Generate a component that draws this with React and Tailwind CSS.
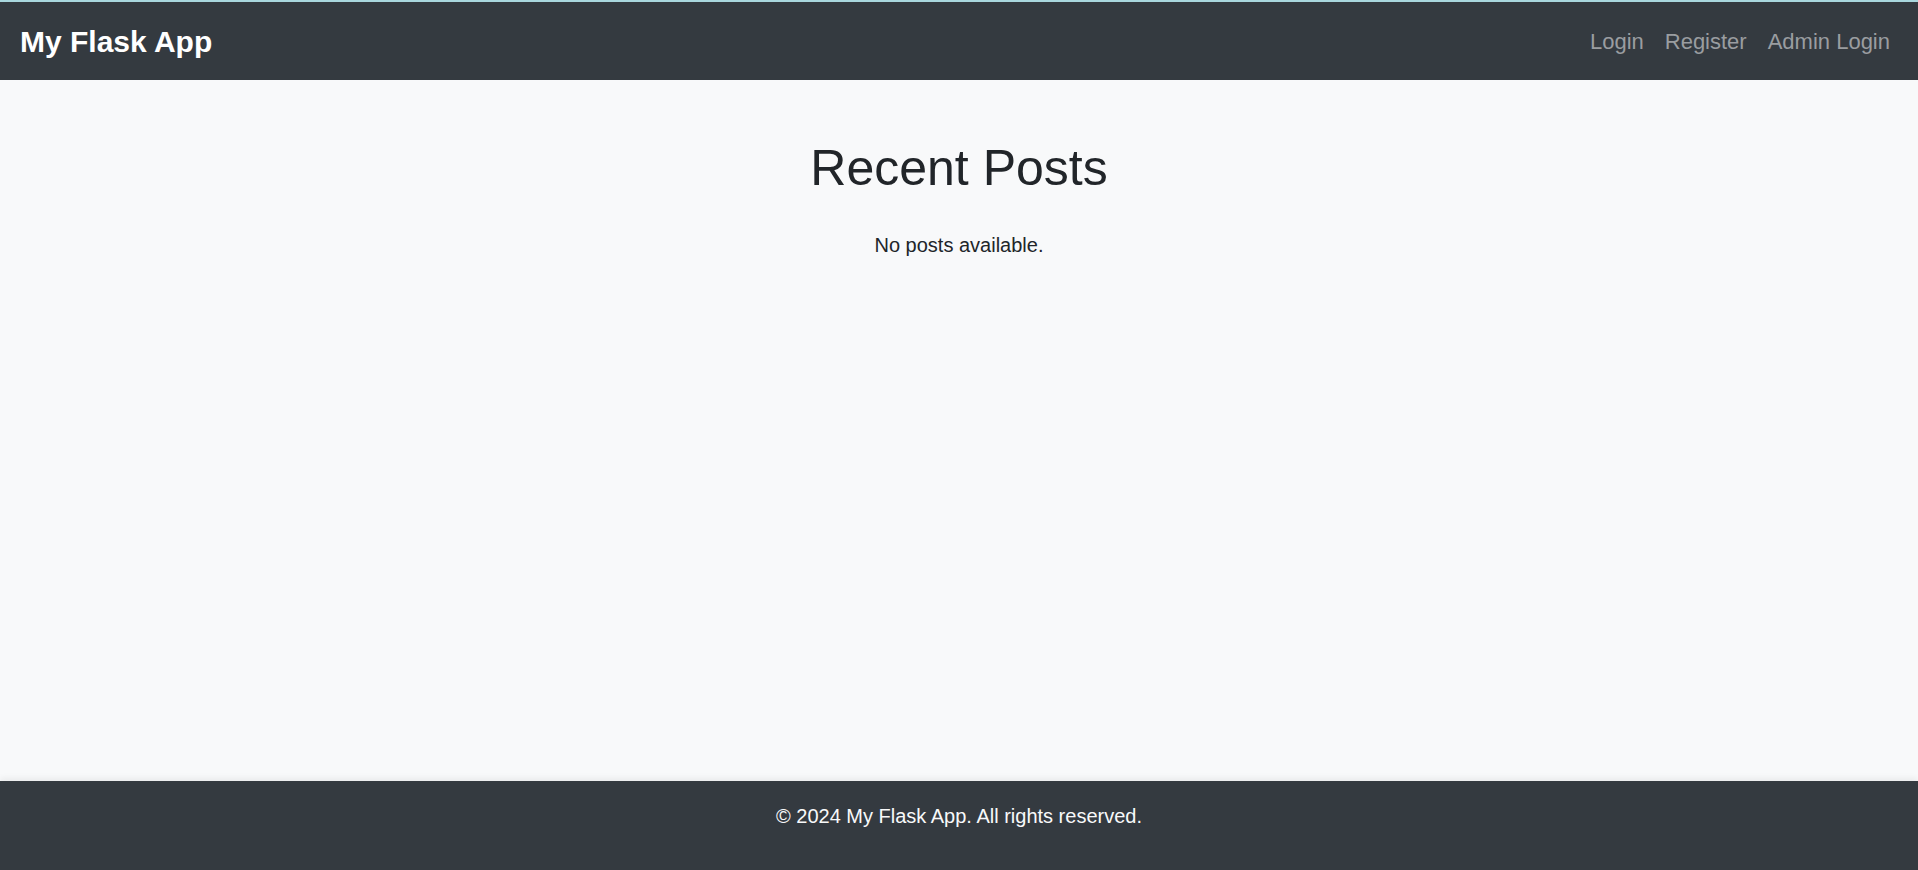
import React from "react";

const links = ["Login", "Register", "Admin Login"];

const App = () => {
  return (
    <div
      className="h-[870px] flex flex-col bg-[#f8f9fa] text-[#212529] overflow-hidden"
      style={{ fontFamily: '"Liberation Sans", Arial, sans-serif' }}
    >
      <div className="h-[2px] bg-[#a9d7de]" />
      <nav className="h-[78px] bg-[#343a40] flex items-center justify-between pl-[20px] pr-[28px]">
        <a href="#" className="text-white font-bold text-[30px] leading-[1.5]">
          My Flask App
        </a>
        <div className="flex items-center gap-[21px]">
          {links.map((link) => (
            <a
              key={link}
              href="#"
              className="text-[22px] leading-[1.5] text-[#9a9da0] hover:text-white"
            >
              {link}
            </a>
          ))}
        </div>
      </nav>
      <main className="flex-1 flex flex-col items-center pt-[58px]">
        <h1 className="text-[50px] leading-[1.2] font-normal">Recent Posts</h1>
        <p className="mt-[32px] text-[20px] leading-[1.5]">No posts available.</p>
      </main>
      <footer className="bg-[#343a40] text-[#f8f9fa] text-center pt-[20px] pb-[39px] shadow-[0_-3px_6px_rgba(0,0,0,0.06)]">
        <p className="text-[20px] leading-[1.5]">© 2024 My Flask App. All rights reserved.</p>
      </footer>
    </div>
  );
};

export default App;
